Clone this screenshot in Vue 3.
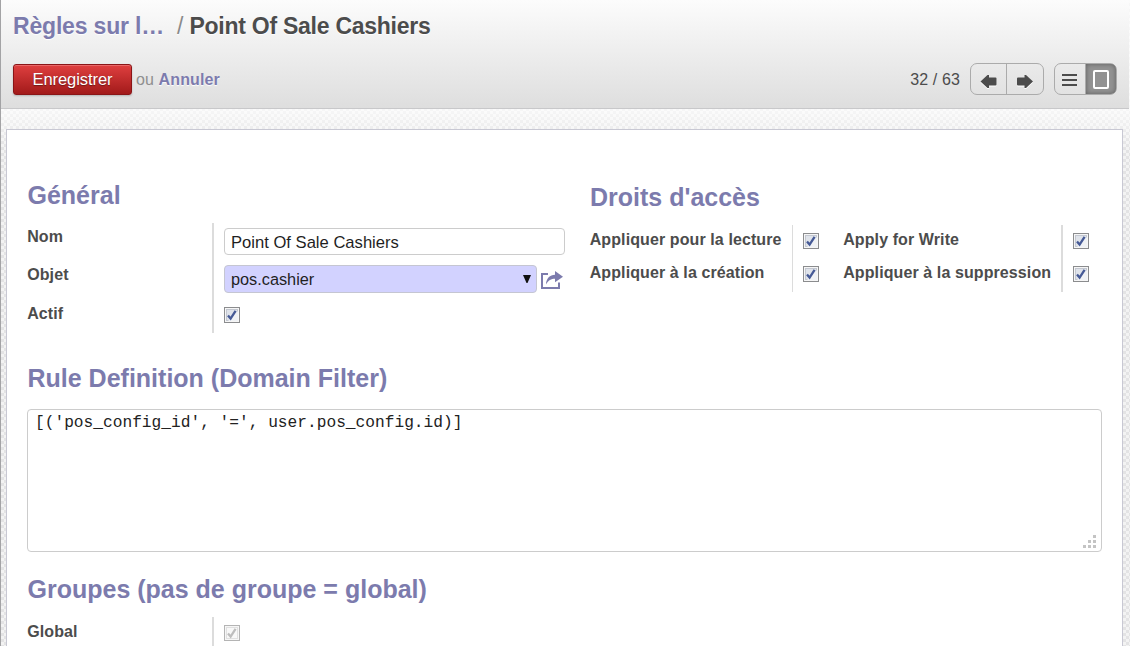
<script setup>
import { ref, h } from 'vue'

const name = ref('Point Of Sale Cashiers')
const domain = ref("[('pos_config_id', '=', user.pos_config.id)]")

const CheckBox = (props) =>
  h('svg', { width: 16, height: 16, viewBox: '0 0 16 16', role: 'checkbox', 'aria-checked': 'true' }, [
    h('rect', { x: 0.5, y: 0.5, width: 15, height: 15, fill: '#f6f6f6', stroke: props.disabled ? '#b4b4b4' : '#8b8c8e' }),
    h('rect', { x: 2.5, y: 2.5, width: 11, height: 11, fill: props.disabled ? '#f8f8f8' : '#dfe3ea', stroke: props.disabled ? '#e0e0e0' : '#c3c7d0' }),
    props.disabled ? null : h('path', { d: 'M14 4v10H4z', fill: '#f0f2f5' }),
    h('path', {
      d: 'M4 8.6L6.6 11.6L11.6 3.8',
      fill: 'none',
      'stroke-width': 2.3,
      stroke: props.disabled ? '#bdbdbd' : '#465a96',
    }),
  ])
CheckBox.props = ['disabled']
</script>

<template>
  <div class="app">
    <header class="bar">
      <h2 class="crumbs">
        <a class="parent">Règles sur l…</a><span class="slash">/</span><span class="current">Point Of Sale Cashiers</span>
      </h2>
      <div class="tools">
        <button class="save">Enregistrer</button>
        <span class="or">ou</span>
        <a class="cancel">Annuler</a>
        <span class="pager">32 / 63</span>
        <div class="group nav">
          <span class="btn">
            <svg width="35" height="30" viewBox="0 0 35 30"><path d="M9.500 17.500L16.500 11h1.500v2.500H24.500q1 0 1 1v6q0 1-1 1h-6.500v2.500H16.500z" fill="#fff" transform="translate(0 1)" /><path d="M9.500 17.500L16.500 11h1.500v2.500H24.500q1 0 1 1v6q0 1-1 1h-6.500v2.500H16.500z" fill="#4c4c4c" /></svg>
          </span>
          <span class="btn">
            <svg width="36" height="30" viewBox="0 0 36 30"><path d="M26 17.500L19 11h-1.500v2.500H11q-1 0-1 1v6q0 1 1 1h6.500v2.500H19z" fill="#fff" transform="translate(0 1)" /><path d="M26 17.500L19 11h-1.500v2.500H11q-1 0-1 1v6q0 1 1 1h6.500v2.500H19z" fill="#4c4c4c" /></svg>
          </span>
        </div>
        <div class="group views">
          <span class="btn">
            <svg width="30" height="30" viewBox="0 0 30 30"><path d="M7 10h15v2H7zM7 15h15v2H7zM7 20h15v2H7z" fill="#4c4c4c" /></svg>
          </span>
          <span class="btn active">
            <svg width="30" height="30" viewBox="0 0 30 30"><rect x="8" y="7" width="14" height="17" rx="1" fill="none" stroke="#fff" stroke-width="2" /></svg>
          </span>
        </div>
      </div>
    </header>

    <main class="sheet">
      <div class="columns">
        <section class="general">
          <h1>Général</h1>
          <div class="form">
            <div class="labels"><label>Nom</label><label>Objet</label><label>Actif</label></div>
            <div class="fields">
              <input v-model="name" class="text" type="text" />
              <div class="relation">
                <div class="select"><span>pos.cashier</span><svg width="8" height="8" viewBox="0 0 8 8"><path d="M0 0h8L4.500 8h-1z" fill="#111" /></svg></div>
                <svg class="open" width="22" height="18" viewBox="0 0 22 18"><path d="M7 3H1v14h17V11.500" fill="none" stroke="#7c7bad" stroke-width="2" /><path d="M5 13.500C5.200 7.200 9 3.800 14 3.700V0l8 5.700l-8 5.600V7.700C10 7.700 7.500 9 5 13.500z" fill="#7c7bad" /></svg>
              </div>
              <CheckBox class="check" />
            </div>
          </div>
        </section>

        <section class="rights">
          <h1>Droits d'accès</h1>
          <div class="rights-grid">
            <div class="pair"><label>Appliquer pour la lecture</label><label>Appliquer à la création</label></div>
            <div class="checks"><CheckBox /><CheckBox /></div>
            <div class="pair second"><label>Apply for Write</label><label>Appliquer à la suppression</label></div>
            <div class="checks thick"><CheckBox /><CheckBox /></div>
          </div>
        </section>
      </div>

      <h1 class="rule">Rule Definition (Domain Filter)</h1>
      <div class="area">
        <textarea v-model="domain" spellcheck="false"></textarea>
        <svg class="grip" width="14" height="13" viewBox="0 0 14 13"><path d="M10 0h3v3h-3zM5 5h3v3H5zM10 5h3v3h-3zM0 10h3v3H0zM5 10h3v3H5zM10 10h3v3h-3z" fill="#c4c4c4" /></svg>
      </div>

      <h1 class="groups">Groupes (pas de groupe = global)</h1>
      <div class="form last">
        <div class="labels"><label>Global</label></div>
        <div class="fields"><CheckBox class="check-global" :disabled="true" /></div>
      </div>
    </main>
  </div>
</template>

<style>
html, body { margin: 0; overflow: hidden; }
</style>

<style scoped>
.app {
  box-sizing: border-box;
  width: 1130px;
  height: 646px;
  overflow: hidden;
  border-left: 1px solid #a3a3a5;
  font-family: "Liberation Sans", Arial, sans-serif;
  font-size: 16px;
  color: #4c4c4c;
  background:
    linear-gradient(rgba(255, 255, 255, .7) 109px, rgba(255, 255, 255, 0) 150px),
    conic-gradient(#e3e3e4 25%, #f3f3f3 0 50%, #e3e3e4 0 75%, #f3f3f3 0) 0 0 / 6px 6px;
}
.bar {
  box-sizing: border-box;
  width: 1128px;
  height: 109px;
  padding: 11px 12px 0;
  border-bottom: 1px solid #c8c8ca;
  background: linear-gradient(#fcfcfc, #dedede);
}
h1, h2 { margin: 0; font-weight: bold; white-space: nowrap; }
.crumbs {
  display: flex;
  height: 30px;
  line-height: 30px;
  font-size: 23px;
  letter-spacing: -.26px;
  text-shadow: 0 1px 1px #fff;
}
.parent { width: 164px; color: #7c7bad; letter-spacing: -.18px; }
.slash { width: 12.500px; color: #8a8a8a; font-weight: normal; }
.tools { display: flex; align-items: center; height: 32px; margin-top: 22px; }
.save {
  width: 119px;
  height: 31px;
  padding: 0;
  border: 1px solid #8a1517;
  border-radius: 3px;
  background: linear-gradient(#df3f3f, #a21a1a);
  box-shadow: 0 1px 2px rgba(0, 0, 0, .2), inset 0 1px 0 rgba(255, 200, 200, .3);
  color: #fff;
  font: 16.500px "Liberation Sans", Arial, sans-serif;
  letter-spacing: -.08px;
  text-shadow: 0 1px 1px rgba(0, 0, 0, .4);
}
.or, .cancel, .pager { padding-top: 2px; }
.or { width: 22.500px; margin-left: 4px; color: #8f8f8f; }
.cancel { color: #7c7bad; font-weight: bold; letter-spacing: .15px; text-shadow: 0 1px 1px #fff; }
.pager { margin-left: auto; margin-right: 10px; letter-spacing: .12px; }
.group {
  display: flex;
  box-sizing: border-box;
  height: 32px;
  border: 1px solid #ababab;
  border-radius: 7px;
}
.nav { width: 74px; margin-right: 10px; }
.views { width: 63px; }
.btn { display: flex; height: 30px; }
.btn + .btn { border-left: 1px solid #ababab; }
.btn.active {
  width: 30px;
  border-radius: 0 5px 5px 0;
  background: #929292;
  box-shadow: inset 0 0 5px rgba(0, 0, 0, .35);
}
.sheet {
  box-sizing: border-box;
  width: 1117px;
  height: 540px;
  margin: 20px 0 0 5px;
  padding: 49px 20px 0;
  border: 1px solid #c8c8d3;
  background: #fff;
}
h1 { height: 32px; line-height: 32px; padding-left: .5px; font-size: 25px; color: #7c7bad; }
label { display: block; padding-left: .2px; font-weight: bold; white-space: nowrap; height: 20px; line-height: 20px; letter-spacing: .1px; }
.columns { display: flex; height: 183px; }
.general { width: 562.500px; }
.form { display: flex; height: 110px; margin-top: 12px; }
.labels { display: flex; flex-direction: column; gap: 18.400px; box-sizing: border-box; width: 187px; padding-top: 4px; border-right: 2px solid #dcdcdc; }
.fields { padding: 5px 0 0 10px; }
.text {
  display: block;
  box-sizing: border-box;
  width: 341px;
  height: 27px;
  padding: 2px 6px 0;
  border: 1px solid #ccc;
  border-radius: 4px;
  outline: 0;
  color: #1f1f1f;
  font: 16.600px "Liberation Sans", Arial, sans-serif;
}
.relation { display: flex; align-items: center; gap: 4px; margin-top: 10px; }
.open { margin-top: 2px; }
.select {
  display: flex;
  align-items: center;
  justify-content: space-between;
  box-sizing: border-box;
  width: 313px;
  height: 28px;
  padding: 0 5px 0 6px;
  border: 1px solid #c5c6d2;
  border-radius: 4px;
  background: #d2d2ff;
  color: #1f1f1f;
  font-size: 16.300px;
}
.check { display: block; margin-top: 14px; }
.rights h1 { margin-top: 2px; }
.rights-grid { display: flex; height: 67px; margin-top: 12px; }
.pair { display: flex; flex-direction: column; gap: 13px; box-sizing: border-box; width: 202.500px; padding-top: 5px; }
.second { width: 218px; margin-left: 24px; }
.checks { display: flex; flex-direction: column; gap: 17px; padding: 8px 0 0 10px; border-left: 1px solid #dcdcdc; }
.thick { border-left-width: 2px; padding-left: 10px; }
.area { position: relative; height: 143px; margin-top: 15px; }
textarea {
  display: block;
  box-sizing: border-box;
  width: 1075px;
  height: 143px;
  padding: 4px 6px 4px 7px;
  border: 1px solid #ccc;
  border-radius: 4px;
  outline: 0;
  resize: none;
  color: #222;
  font: 16.200px/18px "Liberation Mono", monospace;
}
.grip { position: absolute; left: 1056px; top: 126px; }
.groups { margin-top: 21px; }
.last { margin-top: 12px; }
.last .labels { padding-top: 4.600px; }
.check-global { display: block; margin-top: 3px; }
</style>
